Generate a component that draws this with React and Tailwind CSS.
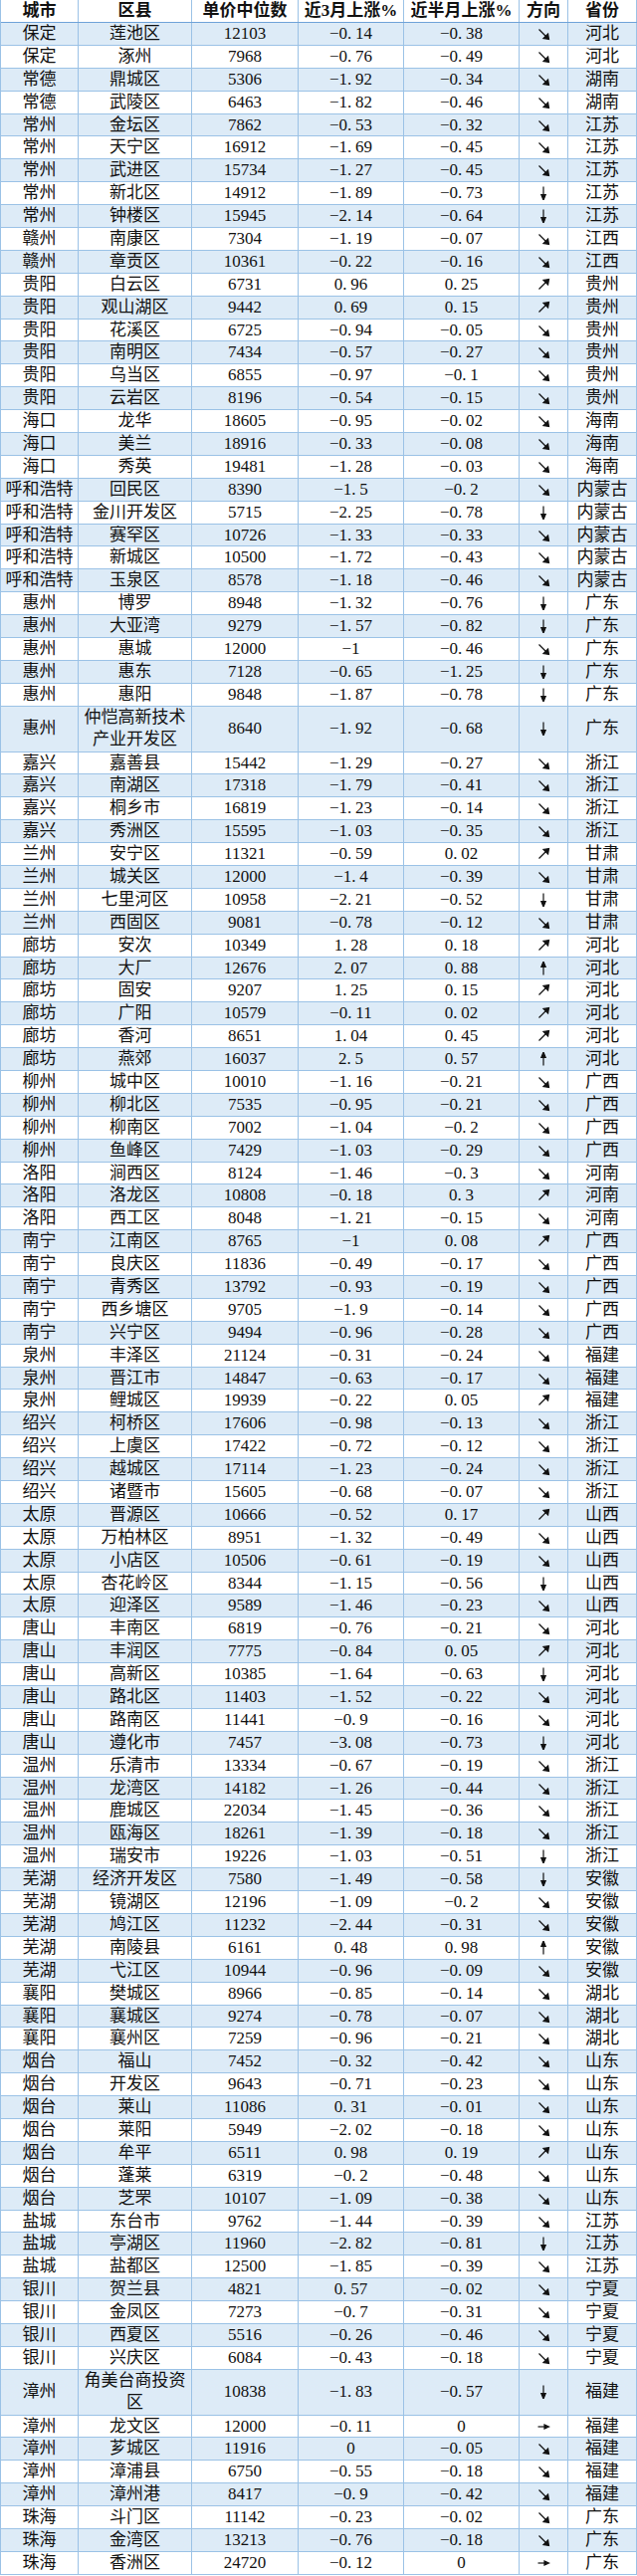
import React from "react";

const raw = `保定,莲池区,12103,-0.14,-0.38,d,河北
保定,涿州,7968,-0.76,-0.49,d,河北
常德,鼎城区,5306,-1.92,-0.34,d,湖南
常德,武陵区,6463,-1.82,-0.46,d,湖南
常州,金坛区,7862,-0.53,-0.32,d,江苏
常州,天宁区,16912,-1.69,-0.45,d,江苏
常州,武进区,15734,-1.27,-0.45,d,江苏
常州,新北区,14912,-1.89,-0.73,D,江苏
常州,钟楼区,15945,-2.14,-0.64,D,江苏
赣州,南康区,7304,-1.19,-0.07,d,江西
赣州,章贡区,10361,-0.22,-0.16,d,江西
贵阳,白云区,6731,0.96,0.25,u,贵州
贵阳,观山湖区,9442,0.69,0.15,u,贵州
贵阳,花溪区,6725,-0.94,-0.05,d,贵州
贵阳,南明区,7434,-0.57,-0.27,d,贵州
贵阳,乌当区,6855,-0.97,-0.1,d,贵州
贵阳,云岩区,8196,-0.54,-0.15,d,贵州
海口,龙华,18605,-0.95,-0.02,d,海南
海口,美兰,18916,-0.33,-0.08,d,海南
海口,秀英,19481,-1.28,-0.03,d,海南
呼和浩特,回民区,8390,-1.5,-0.2,d,内蒙古
呼和浩特,金川开发区,5715,-2.25,-0.78,D,内蒙古
呼和浩特,赛罕区,10726,-1.33,-0.33,d,内蒙古
呼和浩特,新城区,10500,-1.72,-0.43,d,内蒙古
呼和浩特,玉泉区,8578,-1.18,-0.46,d,内蒙古
惠州,博罗,8948,-1.32,-0.76,D,广东
惠州,大亚湾,9279,-1.57,-0.82,D,广东
惠州,惠城,12000,-1,-0.46,d,广东
惠州,惠东,7128,-0.65,-1.25,D,广东
惠州,惠阳,9848,-1.87,-0.78,D,广东
惠州,仲恺高新技术产业开发区,8640,-1.92,-0.68,D,广东
嘉兴,嘉善县,15442,-1.29,-0.27,d,浙江
嘉兴,南湖区,17318,-1.79,-0.41,d,浙江
嘉兴,桐乡市,16819,-1.23,-0.14,d,浙江
嘉兴,秀洲区,15595,-1.03,-0.35,d,浙江
兰州,安宁区,11321,-0.59,0.02,u,甘肃
兰州,城关区,12000,-1.4,-0.39,d,甘肃
兰州,七里河区,10958,-2.21,-0.52,D,甘肃
兰州,西固区,9081,-0.78,-0.12,d,甘肃
廊坊,安次,10349,1.28,0.18,u,河北
廊坊,大厂,12676,2.07,0.88,U,河北
廊坊,固安,9207,1.25,0.15,u,河北
廊坊,广阳,10579,-0.11,0.02,u,河北
廊坊,香河,8651,1.04,0.45,u,河北
廊坊,燕郊,16037,2.5,0.57,U,河北
柳州,城中区,10010,-1.16,-0.21,d,广西
柳州,柳北区,7535,-0.95,-0.21,d,广西
柳州,柳南区,7002,-1.04,-0.2,d,广西
柳州,鱼峰区,7429,-1.03,-0.29,d,广西
洛阳,涧西区,8124,-1.46,-0.3,d,河南
洛阳,洛龙区,10808,-0.18,0.3,u,河南
洛阳,西工区,8048,-1.21,-0.15,d,河南
南宁,江南区,8765,-1,0.08,u,广西
南宁,良庆区,11836,-0.49,-0.17,d,广西
南宁,青秀区,13792,-0.93,-0.19,d,广西
南宁,西乡塘区,9705,-1.9,-0.14,d,广西
南宁,兴宁区,9494,-0.96,-0.28,d,广西
泉州,丰泽区,21124,-0.31,-0.24,d,福建
泉州,晋江市,14847,-0.63,-0.17,d,福建
泉州,鲤城区,19939,-0.22,0.05,u,福建
绍兴,柯桥区,17606,-0.98,-0.13,d,浙江
绍兴,上虞区,17422,-0.72,-0.12,d,浙江
绍兴,越城区,17114,-1.23,-0.24,d,浙江
绍兴,诸暨市,15605,-0.68,-0.07,d,浙江
太原,晋源区,10666,-0.52,0.17,u,山西
太原,万柏林区,8951,-1.32,-0.49,d,山西
太原,小店区,10506,-0.61,-0.19,d,山西
太原,杏花岭区,8344,-1.15,-0.56,D,山西
太原,迎泽区,9589,-1.46,-0.23,d,山西
唐山,丰南区,6819,-0.76,-0.21,d,河北
唐山,丰润区,7775,-0.84,0.05,u,河北
唐山,高新区,10385,-1.64,-0.63,D,河北
唐山,路北区,11403,-1.52,-0.22,d,河北
唐山,路南区,11441,-0.9,-0.16,d,河北
唐山,遵化市,7457,-3.08,-0.73,D,河北
温州,乐清市,13334,-0.67,-0.19,d,浙江
温州,龙湾区,14182,-1.26,-0.44,d,浙江
温州,鹿城区,22034,-1.45,-0.36,d,浙江
温州,瓯海区,18261,-1.39,-0.18,d,浙江
温州,瑞安市,19226,-1.03,-0.51,D,浙江
芜湖,经济开发区,7580,-1.49,-0.58,D,安徽
芜湖,镜湖区,12196,-1.09,-0.2,d,安徽
芜湖,鸠江区,11232,-2.44,-0.31,d,安徽
芜湖,南陵县,6161,0.48,0.98,U,安徽
芜湖,弋江区,10944,-0.96,-0.09,d,安徽
襄阳,樊城区,8966,-0.85,-0.14,d,湖北
襄阳,襄城区,9274,-0.78,-0.07,d,湖北
襄阳,襄州区,7259,-0.96,-0.21,d,湖北
烟台,福山,7452,-0.32,-0.42,d,山东
烟台,开发区,9643,-0.71,-0.23,d,山东
烟台,莱山,11086,0.31,-0.01,d,山东
烟台,莱阳,5949,-2.02,-0.18,d,山东
烟台,牟平,6511,0.98,0.19,u,山东
烟台,蓬莱,6319,-0.2,-0.48,d,山东
烟台,芝罘,10107,-1.09,-0.38,d,山东
盐城,东台市,9762,-1.44,-0.39,d,江苏
盐城,亭湖区,11960,-2.82,-0.81,D,江苏
盐城,盐都区,12500,-1.85,-0.39,d,江苏
银川,贺兰县,4821,0.57,-0.02,d,宁夏
银川,金凤区,7273,-0.7,-0.31,d,宁夏
银川,西夏区,5516,-0.26,-0.46,d,宁夏
银川,兴庆区,6084,-0.43,-0.18,d,宁夏
漳州,角美台商投资区,10838,-1.83,-0.57,D,福建
漳州,龙文区,12000,-0.11,0,r,福建
漳州,芗城区,11916,0,-0.05,d,福建
漳州,漳浦县,6750,-0.55,-0.18,d,福建
漳州,漳州港,8417,-0.9,-0.42,d,福建
珠海,斗门区,11142,-0.23,-0.02,d,广东
珠海,金湾区,13213,-0.76,-0.18,d,广东
珠海,香洲区,24720,-0.12,0,r,广东`;

const rows = raw.split("\n").map((l) => l.split(","));

const cols = "grid grid-cols-[78px_114px_107px_106px_116px_49px_69px]";
const cell = "flex items-center justify-center border-r border-[#9bc2e6] text-center";

const Arrow = ({ dir }) => {
  let body;
  if (dir === "d")
    body = (
      <>
        <line x1="2.5" y1="2.5" x2="10" y2="10" />
        <polygon points="12.5,12.5 7,11.6 11.6,7" />
      </>
    );
  else if (dir === "D")
    body = (
      <>
        <line x1="7" y1="0.5" x2="7" y2="10" />
        <polygon points="7,14 4.8,8.6 9.2,8.6" />
      </>
    );
  else if (dir === "u")
    body = (
      <>
        <line x1="2.5" y1="11.5" x2="10" y2="4" />
        <polygon points="12.5,1.5 7,2.4 11.6,7" />
      </>
    );
  else if (dir === "U")
    body = (
      <>
        <line x1="7" y1="13.5" x2="7" y2="4" />
        <polygon points="7,0 4.8,5.4 9.2,5.4" />
      </>
    );
  else
    body = (
      <>
        <line x1="1.5" y1="7" x2="9" y2="7" />
        <polygon points="12.5,7 8,5 8,9" />
      </>
    );
  return (
    <svg width="14" height="14" viewBox="0 0 14 14" stroke="#111" strokeWidth="1.2" fill="#111">
      {body}
    </svg>
  );
};

// SimSun style number: wide minus, half-width period
const Num = ({ v }) => {
  const neg = v.startsWith("-");
  const [a, b] = (neg ? v.slice(1) : v).split(".");
  return (
    <span className="whitespace-nowrap">
      {neg ? "−" : ""}
      {a}
      {b !== undefined && <span className="inline-block w-[8px] text-left">.</span>}
      {b}
    </span>
  );
};

export default function App() {
  return (
    <div
      className="w-[640px] bg-white text-[#111] text-[17px] leading-[20px] border-l border-[#9bc2e6]"
      style={{ fontFamily: "'Liberation Serif', 'Noto Sans CJK SC', serif" }}
    >
      <div className={`${cols} h-[23px] border-b border-[#6fa3d8] font-bold`}>
        <div className={cell}>城市</div>
        <div className={cell}>区县</div>
        <div className={cell}>单价中位数</div>
        <div className={cell}>近3月上涨%</div>
        <div className={cell}>近半月上涨%</div>
        <div className={cell}>方向</div>
        <div className={cell}>省份</div>
      </div>
      {rows.map((r, i) => {
        const tall = r[1].length > 5;
        return (
          <div
            key={i}
            className={`${cols} border-b border-[#9bc2e6] ${tall ? "h-[45.8px]" : "h-[22.9px]"} ${
              i % 2 === 0 ? "bg-[#ddebf7]" : "bg-white"
            }`}
          >
            <div className={cell}>{r[0]}</div>
            <div className={`${cell} px-[5px] leading-[22px]`}>{r[1]}</div>
            <div className={cell}>
              <Num v={r[2]} />
            </div>
            <div className={cell}>
              <Num v={r[3]} />
            </div>
            <div className={cell}>
              <Num v={r[4]} />
            </div>
            <div className={cell}>
              <Arrow dir={r[5]} />
            </div>
            <div className={cell}>{r[6]}</div>
          </div>
        );
      })}
    </div>
  );
}
